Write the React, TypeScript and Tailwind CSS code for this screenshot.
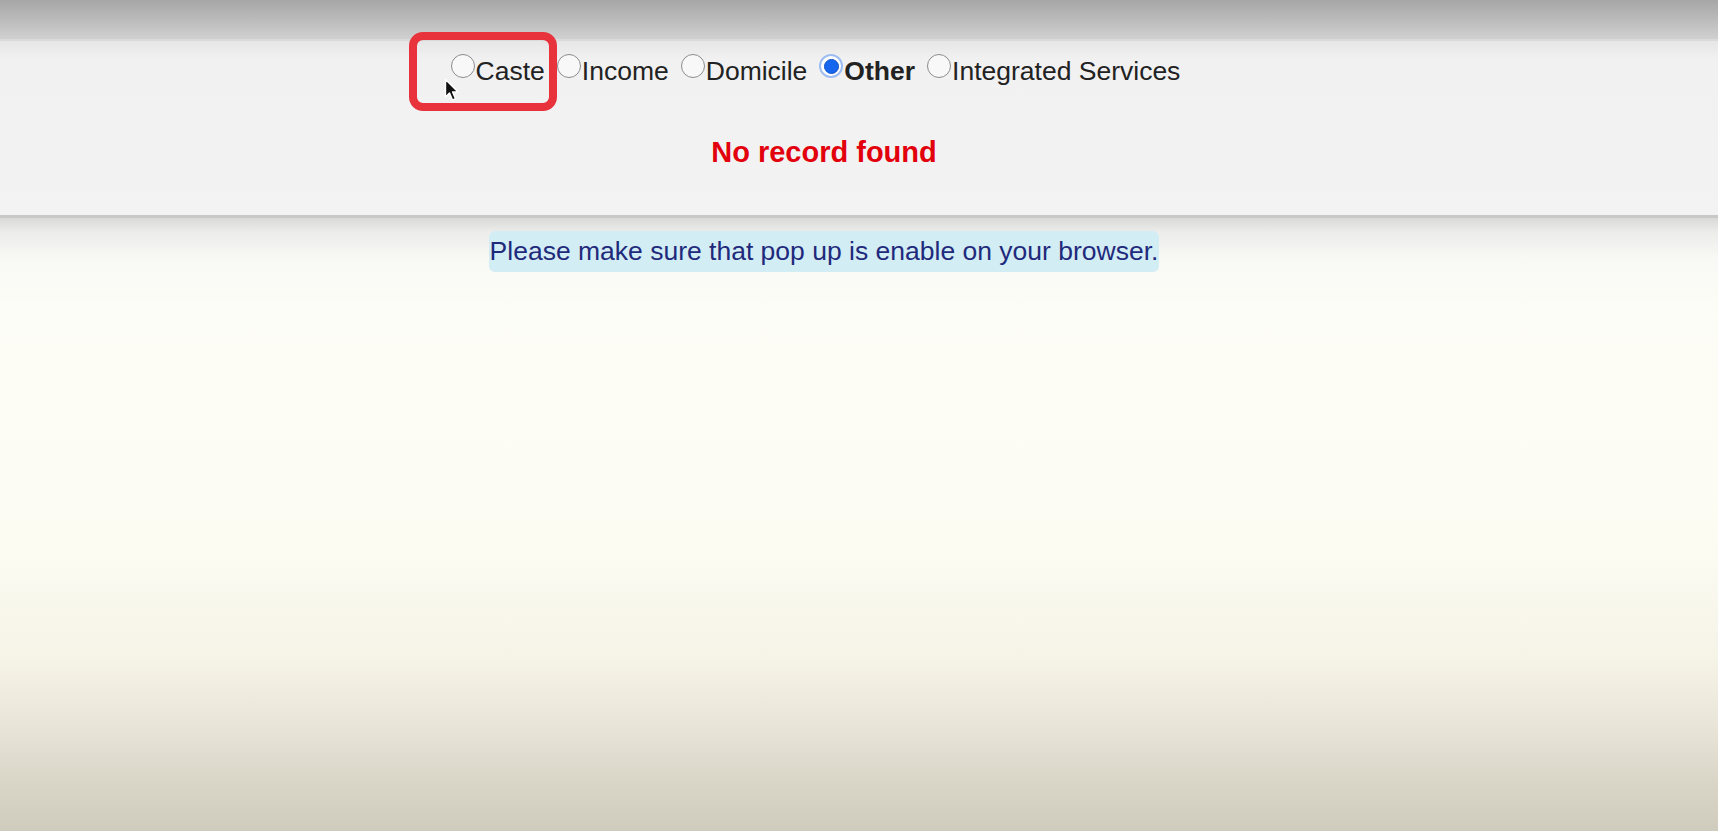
import React from 'react';

const options = [
  { label: 'Caste', checked: false },
  { label: 'Income', checked: false },
  { label: 'Domicile', checked: false },
  { label: 'Other', checked: true },
  { label: 'Integrated Services', checked: false },
];

const Radio = ({ checked }: { checked: boolean }) =>
  checked ? (
    <span className="w-[24px] h-[24px] shrink-0 rounded-full border-[2px] border-[#9dbdf2] bg-white flex items-center justify-center">
      <span className="w-[15px] h-[15px] rounded-full bg-[#1766ee] border border-[#0f52c8]" />
    </span>
  ) : (
    <span className="w-[24px] h-[24px] shrink-0 rounded-full border-[1.5px] border-[#8c8c8c] bg-[#f8f8f8]" />
  );

const Cursor = () => (
  <svg className="absolute left-[444px] top-[78px]" width="16" height="24" viewBox="0 0 16 24">
    <path d="M1.5 1.5 L1.5 19 L5.5 15 L8.5 22 L11.5 20.8 L8.6 14 L14 14 Z" fill="#111" stroke="#fff" strokeWidth="1.4" strokeLinejoin="round" />
  </svg>
);

export default function App() {
  return (
    <div className="relative min-h-screen w-full flex flex-col font-['Liberation_Sans',Arial,sans-serif] bg-[#cfcbbd]">
      {/* browser chrome band */}
      <div className="h-[41px] bg-[linear-gradient(to_bottom,#a6a6a6,#d0d0d0)] border-b-[2px] border-[#dadada]" />

      {/* form panel */}
      <div className="h-[177px] bg-[linear-gradient(to_bottom,#e6e6e6_0px,#f1f1f1_18px,#f3f3f3_100%)] border-b-[3px] border-[#c8c8c8] flex flex-col items-center pr-[70px]">
        <div className="flex items-start pt-[13px] mr-[17px] gap-[12px]">
          {options.map((o) => (
            <label key={o.label} className="flex items-start gap-[1px] cursor-pointer">
              <Radio checked={o.checked} />
              <span
                className={
                  'mt-[3.5px] text-[26.5px] leading-none text-[#222] whitespace-nowrap ' +
                  (o.checked ? 'font-bold text-[#111]' : '')
                }
              >
                {o.label}
              </span>
            </label>
          ))}
        </div>
        <p className="mt-[54px] text-[29px] leading-none font-bold text-[#e2000c]">No record found</p>
      </div>

      {/* page body */}
      <div className="flex-1 flex flex-col items-center pr-[70px] bg-[linear-gradient(to_bottom,#d9d9d7_0px,#ececea_14px,#f8f8f5_40px,#fdfdf7_90px,#fcfcf3_330px,#f6f3e7_440px,#e8e5d8_510px,#dad7c9_560px,#cfcbbd_100%)]">
        <div className="mt-[13px] px-[1px] pt-[7px] pb-[5px] rounded-[6px] bg-[#d3edf4]">
          <span className="text-[26.5px] leading-none text-[#1f2a7c] whitespace-nowrap">
            Please make sure that pop up is enable on your browser.
          </span>
        </div>
      </div>

      {/* annotation overlay */}
      <div className="absolute left-[409px] top-[32px] w-[148px] h-[79px] border-[8px] border-[#e8323c] rounded-[14px]" />
      <Cursor />
    </div>
  );
}
